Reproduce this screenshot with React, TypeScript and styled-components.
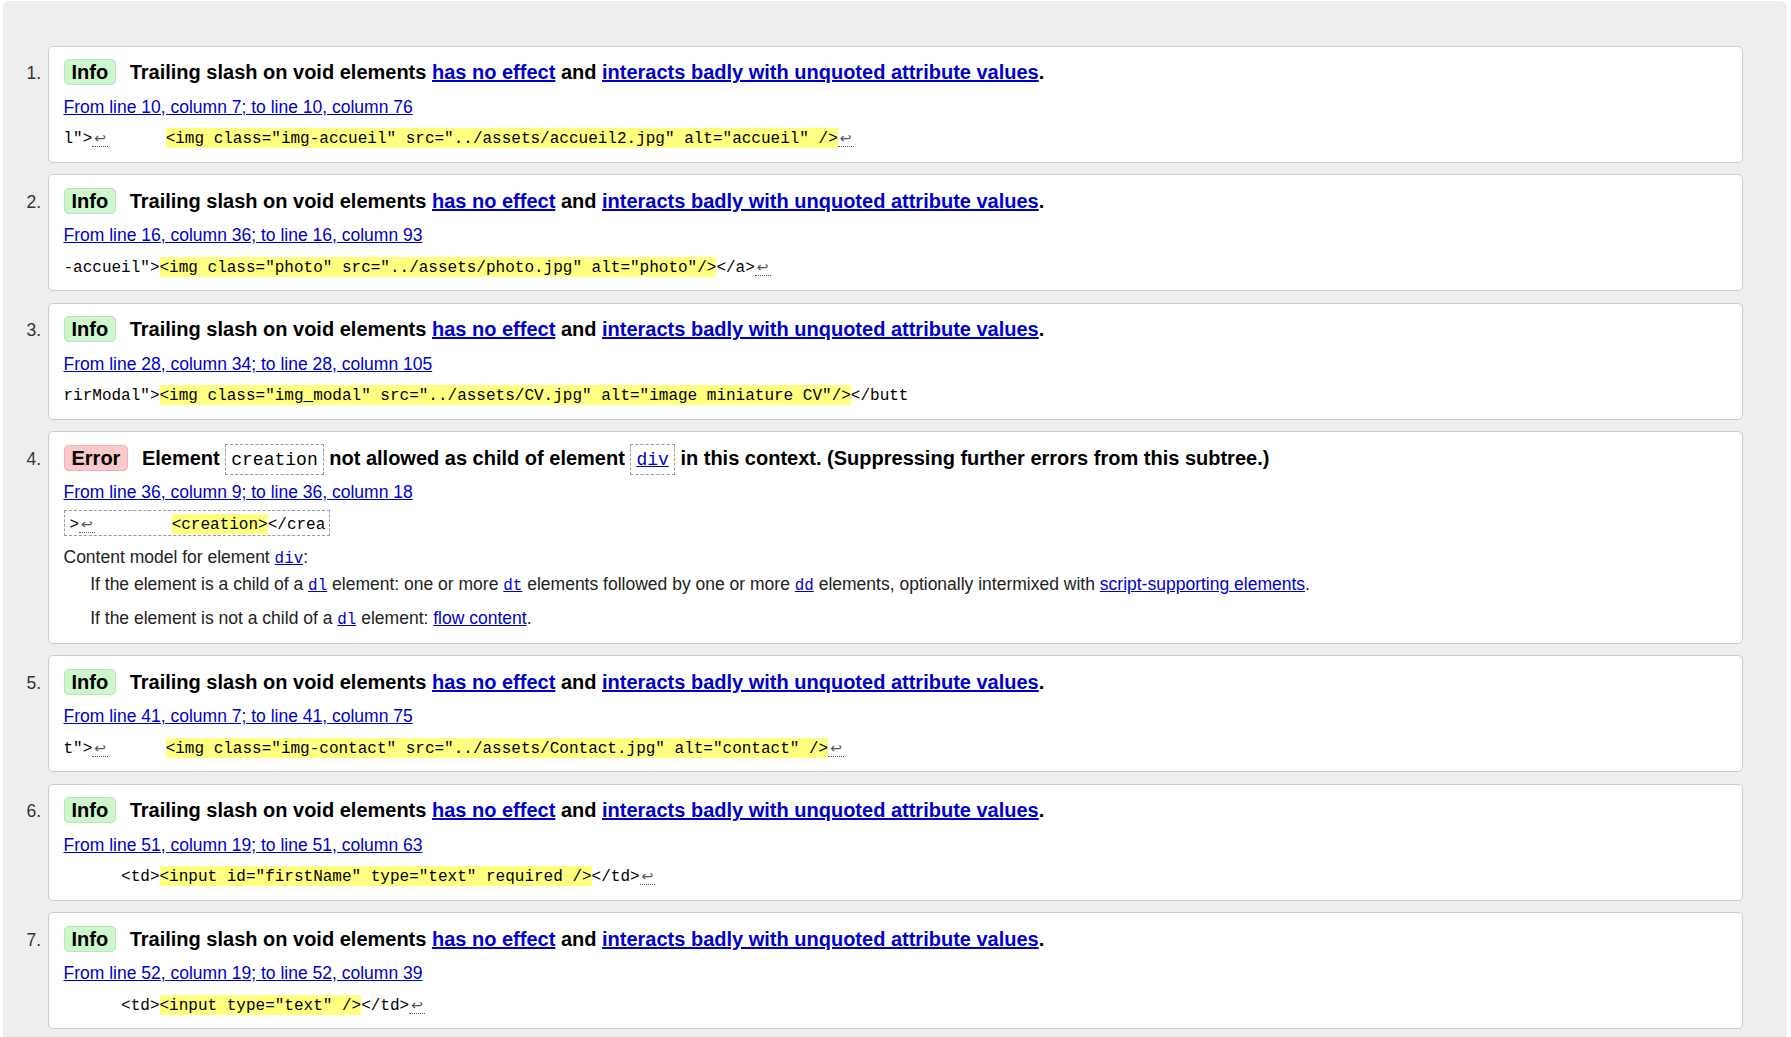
import React from "react";
import styled, { createGlobalStyle, css } from "styled-components";

const GlobalStyle = createGlobalStyle`
  html, body {
    margin: 0;
    padding: 0;
    background: #ffffff;
  }
  body {
    font-family: "Liberation Sans", Arial, sans-serif;
    font-size: 17.5px;
    color: #000000;
  }
`;

const Page = styled.div`
  padding: 1px 4px 0 3px;
`;

const Panel = styled.ol`
  list-style: none;
  margin: 0;
  padding: 44.7px 44px 44px 0;
  background: #eeeeee;
  border-radius: 6px 6px 0 0;
  display: flex;
  flex-direction: column;
  gap: 11.5px;
`;

const Item = styled.li`
  display: flex;
  align-items: baseline;
`;

const Num = styled.span`
  flex: 0 0 45px;
  box-sizing: border-box;
  text-align: right;
  padding-right: 7px;
  color: #333333;
  font-size: 17.5px;
`;

const Card = styled.div`
  flex: 1;
  min-width: 0;
  background: #ffffff;
  border: 1px solid #cccccc;
  border-radius: 5px;
  padding: 13.5px 15px 11.5px 14.5px;
`;

const Title = styled.p`
  margin: 0;
  font-size: 20px;
  font-weight: bold;
  line-height: 24px;
`;

const Badge = styled.strong<{ $kind: "info" | "error" }>`
  padding: 1px 7px;
  margin-right: 13.5px;
  border-radius: 5px;
  ${(p) =>
    p.$kind === "info"
      ? css`
          background: #ccf7cc;
          border: 1px solid #b8e6b8;
        `
      : css`
          background: #fbc9c9;
          border: 1px solid #ecb2b2;
        `}
`;

const Link = styled.a`
  color: #0000cc;
  text-decoration: underline;
`;

const CodeLink = styled.a`
  color: #0000cc;
  text-decoration: underline;
  font-family: "Liberation Mono", monospace;
  font-size: 0.91em;
  font-weight: normal;
  line-height: 1;
`;

const TitleCode = styled.code`
  font-family: "Liberation Mono", monospace;
  font-size: 0.9em;
  font-weight: normal;
  line-height: 1;
  border: 1px dashed #999999;
  padding: 5px 5px 4px 5px;

  & > a {
    font-size: 1em;
  }
`;

const Location = styled.p`
  margin: 11.5px 0 0;
  line-height: 22px;
`;

const Extract = styled.p`
  margin: 10.5px 0 0;
  line-height: 22px;
  font-family: "Liberation Mono", monospace;
  font-size: 16px;
  white-space: pre;
  color: #000000;
`;

const ExtractCode = styled.code<{ $boxed?: boolean }>`
  font: inherit;
  ${(p) =>
    p.$boxed &&
    css`
      border: 1px dashed #999999;
      padding: 5px 4px 1px 5px;
    `}
`;

const Mark = styled.mark`
  background: #ffff80;
  color: inherit;
  padding-top: 2px;
`;

const LineFeed = styled.span`
  font-family: "DejaVu Sans", sans-serif;
  font-size: 14px;
  line-height: 1;
  color: #555555;
  padding: 0 2px;
  border-bottom: 1px dotted #555555;
`;

const ModelList = styled.dl`
  margin: 10.4px 0 0;
  color: #222222;
`;

const ModelHead = styled.dt`
  line-height: 22px;
`;

const ModelItem = styled.dd`
  margin: 5.3px 0 0 26.7px;
  line-height: 22px;

  & + & {
    margin-top: 12px;
  }
  &:last-child {
    margin-bottom: 2px;
  }
`;

type Part = { k: "t" | "m" | "lf"; v?: string };

const t = (v: string): Part => ({ k: "t", v });
const m = (v: string): Part => ({ k: "m", v });
const lf: Part = { k: "lf" };

type Msg = {
  kind: "info" | "error";
  location: string;
  extract: Part[];
};

const infoMsgs: Record<number, Msg> = {
  1: {
    kind: "info",
    location: "From line 10, column 7; to line 10, column 76",
    extract: [
      t('l">'),
      lf,
      t("      "),
      m('<img class="img-accueil" src="../assets/accueil2.jpg" alt="accueil" />'),
      lf,
    ],
  },
  2: {
    kind: "info",
    location: "From line 16, column 36; to line 16, column 93",
    extract: [
      t('-accueil">'),
      m('<img class="photo" src="../assets/photo.jpg" alt="photo"/>'),
      t("</a>"),
      lf,
    ],
  },
  3: {
    kind: "info",
    location: "From line 28, column 34; to line 28, column 105",
    extract: [
      t('rirModal">'),
      m('<img class="img_modal" src="../assets/CV.jpg" alt="image miniature CV"/>'),
      t("</butt"),
    ],
  },
  5: {
    kind: "info",
    location: "From line 41, column 7; to line 41, column 75",
    extract: [
      t('t">'),
      lf,
      t("      "),
      m('<img class="img-contact" src="../assets/Contact.jpg" alt="contact" />'),
      lf,
    ],
  },
  6: {
    kind: "info",
    location: "From line 51, column 19; to line 51, column 63",
    extract: [
      t("      <td>"),
      m('<input id="firstName" type="text" required />'),
      t("</td>"),
      lf,
    ],
  },
  7: {
    kind: "info",
    location: "From line 52, column 19; to line 52, column 39",
    extract: [t("      <td>"), m('<input type="text" />'), t("</td>"), lf],
  },
};

const errorExtract: Part[] = [t(">"), lf, t("        "), m("<creation>"), t("</crea")];

function renderParts(parts: Part[]) {
  return parts.map((p, i) => {
    if (p.k === "m") return <Mark key={i}>{p.v}</Mark>;
    if (p.k === "lf")
      return (
        <LineFeed key={i} title="Line break">
          ↩
        </LineFeed>
      );
    return <React.Fragment key={i}>{p.v}</React.Fragment>;
  });
}

function InfoCard({ msg }: { msg: Msg }) {
  return (
    <Card>
      <Title>
        <Badge $kind="info">Info</Badge>
        Trailing slash on void elements <Link href="#">has no effect</Link> and{" "}
        <Link href="#">interacts badly with unquoted attribute values</Link>.
      </Title>
      <Location>
        <Link href="#">{msg.location}</Link>
      </Location>
      <Extract>
        <ExtractCode>{renderParts(msg.extract)}</ExtractCode>
      </Extract>
    </Card>
  );
}

function ErrorCard() {
  return (
    <Card>
      <Title>
        <Badge $kind="error">Error</Badge>
        Element <TitleCode>creation</TitleCode> not allowed as child of element{" "}
        <TitleCode>
          <CodeLink href="#">div</CodeLink>
        </TitleCode>{" "}
        in this context. (Suppressing further errors from this subtree.)
      </Title>
      <Location>
        <Link href="#">From line 36, column 9; to line 36, column 18</Link>
      </Location>
      <Extract>
        <ExtractCode $boxed>{renderParts(errorExtract)}</ExtractCode>
      </Extract>
      <ModelList>
        <ModelHead>
          Content model for element <CodeLink href="#">div</CodeLink>:
        </ModelHead>
        <ModelItem>
          If the element is a child of a <CodeLink href="#">dl</CodeLink> element: one or more{" "}
          <CodeLink href="#">dt</CodeLink> elements followed by one or more{" "}
          <CodeLink href="#">dd</CodeLink> elements, optionally intermixed with{" "}
          <Link href="#">script-supporting elements</Link>.
        </ModelItem>
        <ModelItem>
          If the element is not a child of a <CodeLink href="#">dl</CodeLink> element:{" "}
          <Link href="#">flow content</Link>.
        </ModelItem>
      </ModelList>
    </Card>
  );
}

export default function App() {
  const order = [1, 2, 3, 4, 5, 6, 7];
  return (
    <>
      <GlobalStyle />
      <Page>
        <Panel>
          {order.map((n) => (
            <Item key={n}>
              <Num>{n}.</Num>
              {n === 4 ? <ErrorCard /> : <InfoCard msg={infoMsgs[n]} />}
            </Item>
          ))}
        </Panel>
      </Page>
    </>
  );
}
